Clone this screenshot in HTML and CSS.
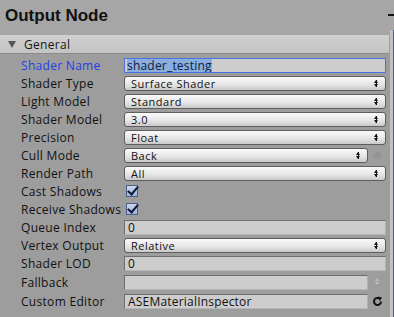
FILE: index.html
```html
<!DOCTYPE html>
<html lang="en">
<head>
  <meta charset="UTF-8" />
  <title>Output Node</title>
  <link rel="stylesheet" href="styles.css">
</head>
<body>
  <div class="inspector">
    <div class="title-bar">
      <h1>Output Node</h1>
      <span class="dash"></span>
    </div>

    <div class="section">
      <div class="section-head">
        <span class="fold"></span>
        General
      </div>

      <div class="rows">
        <div class="row">
          <label class="focus">Shader Name</label>
          <div class="field text active"><span class="sel">shader_testing</span></div>
        </div>
        <div class="row">
          <label>Shader Type</label>
          <div class="field popup">Surface Shader<span class="arrows"></span></div>
        </div>
        <div class="row">
          <label>Light Model</label>
          <div class="field popup">Standard<span class="arrows"></span></div>
        </div>
        <div class="row">
          <label>Shader Model</label>
          <div class="field popup">3.0<span class="arrows"></span></div>
        </div>
        <div class="row">
          <label>Precision</label>
          <div class="field popup">Float<span class="arrows"></span></div>
        </div>
        <div class="row">
          <label>Cull Mode</label>
          <div class="field popup short">Back<span class="arrows"></span></div>
          <span class="side"><span class="dot"></span></span>
        </div>
        <div class="row">
          <label>Render Path</label>
          <div class="field popup">All<span class="arrows"></span></div>
        </div>
        <div class="row">
          <label>Cast Shadows</label>
          <span class="check"></span>
        </div>
        <div class="row">
          <label>Receive Shadows</label>
          <span class="check"></span>
        </div>
        <div class="row">
          <label>Queue Index</label>
          <div class="field text">0</div>
        </div>
        <div class="row">
          <label>Vertex Output</label>
          <div class="field popup">Relative<span class="arrows"></span></div>
        </div>
        <div class="row">
          <label>Shader LOD</label>
          <div class="field text">0</div>
        </div>
        <div class="row tall">
          <label>Fallback</label>
          <div class="field text short"></div>
          <span class="side"><span class="arrows faded"></span></span>
        </div>
        <div class="row">
          <label>Custom Editor</label>
          <div class="field text short">ASEMaterialInspector</div>
          <span class="side">
            <svg width="11" height="11" viewBox="0 0 11 11">
              <path d="M9 5.5 A3.5 3.5 0 1 1 7.2 2.4" fill="none" stroke="#111" stroke-width="2"/>
              <path d="M5.8 0.6 L10 1.6 L7.6 5 Z" fill="#111"/>
            </svg>
          </span>
        </div>
      </div>
    </div>
    <div class="edge"></div>
  </div>
</body>
</html>
```

FILE: styles.css
```css
body {
  margin: 0;
  background-color: #9d9d9d;
  font-family: 'Open Sans', 'DejaVu Sans', sans-serif;
  color: #111;
}

.inspector {
  position: relative;
  width: 394px;
  height: 317px;
  overflow: hidden;
  background-color: #9d9d9d;
}

.title-bar {
  height: 35px;
  display: flex;
  align-items: center;
  justify-content: space-between;
  background-color: #a6a6a6;
}

.title-bar h1 {
  margin: 0 0 0 5px;
  font-family: 'Liberation Sans', sans-serif;
  font-size: 17px;
  font-weight: 700;
  color: #111;
  padding-bottom: 4px;
}

.dash {
  width: 6px;
  height: 2px;
  background-color: #111;
  margin-bottom: 5px;
}

.section-head {
  width: 389px;
  height: 19px;
  box-sizing: border-box;
  display: flex;
  align-items: center;
  gap: 8px;
  padding-left: 8px;
  font-size: 12px;
  letter-spacing: 0.3px;
  color: #151515;
  background: linear-gradient(#d0d0d0, #c4c4c4);
  border-bottom: 1px solid #8a8a8a;
}

.fold {
  width: 0;
  height: 0;
  border-left: 4px solid transparent;
  border-right: 4px solid transparent;
  border-top: 7px solid #555;
}

.rows {
  padding-top: 2px;
  display: flex;
  flex-direction: column;
}

.row {
  height: 18px;
  display: flex;
  align-items: center;
  padding-left: 21px;
}

.row.tall {
  height: 20px;
}

.row label {
  width: 103px;
  flex: none;
  font-size: 12px;
  letter-spacing: 0.3px;
  color: #111;
  white-space: nowrap;
}

.row label.focus {
  color: #1f3fe8;
}

.field {
  box-sizing: border-box;
  width: 262px;
  height: 15px;
  font-size: 11px;
  line-height: 13px;
  white-space: nowrap;
  overflow: hidden;
}

.field.short {
  width: 244px;
}

.field.text {
  background-color: #cdcdcd;
  border: 1px solid #6e6e6e;
  border-bottom-color: #b5b5b5;
  border-right-color: #b0b0b0;
  padding-left: 3px;
  font-size: 12px;
  letter-spacing: 0.2px;
}

.field.active {
  border: 1px solid #4a72e0;
  padding-left: 2px;
}

.sel {
  background-color: #8aaedd;
  color: #0f1a3c;
}

.field.popup {
  position: relative;
  border: 1px solid #5e5e5e;
  border-radius: 3px;
  background: linear-gradient(#fafafa, #e4e4e4 60%, #c9c9c9);
  padding-left: 6px;
  letter-spacing: 0.5px;
}

.arrows {
  position: absolute;
  right: 6px;
  top: 3px;
  width: 5px;
  height: 7px;
  background:
    linear-gradient(#111, #111) center / 1px 100% no-repeat;
}

.arrows::before,
.arrows::after {
  content: '';
  position: absolute;
  left: 0;
  border-left: 2.5px solid transparent;
  border-right: 2.5px solid transparent;
}

.arrows::before {
  top: 0;
  border-bottom: 3px solid #111;
}

.arrows::after {
  bottom: 0;
  border-top: 3px solid #111;
}

.side {
  position: relative;
  width: 18px;
  height: 15px;
  display: flex;
  align-items: center;
  justify-content: center;
}

.side .arrows {
  right: 6px;
}

.arrows.faded {
  background: none;
  opacity: 0.35;
}

.arrows.faded::before,
.arrows.faded::after {
  border-bottom-color: #fff;
  border-top-color: #fff;
}

.dot {
  width: 7px;
  height: 7px;
  border-radius: 50%;
  background-color: #949494;
}

.check {
  width: 12px;
  height: 12px;
  box-sizing: border-box;
  margin-left: 2px;
  border: 1px solid #4c5f86;
  background: linear-gradient(#c9d6ef, #9fb3da);
  position: relative;
}

.check::after {
  content: '';
  position: absolute;
  left: 3px;
  top: -2px;
  width: 4px;
  height: 9px;
  border-right: 2px solid #0c1a3a;
  border-bottom: 2px solid #0c1a3a;
  transform: rotate(40deg);
}

.edge {
  position: absolute;
  right: 0;
  top: 30px;
  bottom: 0;
  width: 4px;
  background-color: #c2c2c2;
  border-right: 1px solid #52607e;
  box-sizing: border-box;
}
```
